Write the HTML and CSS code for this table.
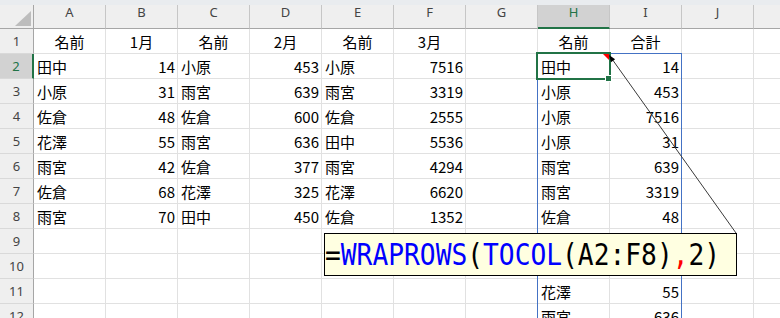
FILE: index.html
```html
<!DOCTYPE html>
<html lang="ja">
<head>
<meta charset="utf-8">
<title>WRAPROWS</title>
<link rel="stylesheet" href="styles.css">
</head>
<body>
<div class="page">
  <div class="topbar"></div>
  <div class="sheet">
    <div class="corner"></div>
    <div class="ch">A</div><div class="ch">B</div><div class="ch">C</div><div class="ch">D</div><div class="ch">E</div><div class="ch">F</div><div class="ch">G</div><div class="ch on">H</div><div class="ch">I</div><div class="ch">J</div><div class="ch"></div>

    <div class="rh">1</div>
    <div class="c m">名前</div><div class="c m">1月</div><div class="c m">名前</div><div class="c m">2月</div><div class="c m">名前</div><div class="c m">3月</div><div class="c"></div><div class="c m">名前</div><div class="c m">合計</div><div class="c"></div><div class="c"></div>

    <div class="rh on">2</div>
    <div class="c">田中</div><div class="c n">14</div><div class="c">小原</div><div class="c n">453</div><div class="c">小原</div><div class="c n">7516</div><div class="c"></div><div class="c">田中</div><div class="c n">14</div><div class="c"></div><div class="c"></div>

    <div class="rh">3</div>
    <div class="c">小原</div><div class="c n">31</div><div class="c">雨宮</div><div class="c n">639</div><div class="c">雨宮</div><div class="c n">3319</div><div class="c"></div><div class="c">小原</div><div class="c n">453</div><div class="c"></div><div class="c"></div>

    <div class="rh">4</div>
    <div class="c">佐倉</div><div class="c n">48</div><div class="c">佐倉</div><div class="c n">600</div><div class="c">佐倉</div><div class="c n">2555</div><div class="c"></div><div class="c">小原</div><div class="c n">7516</div><div class="c"></div><div class="c"></div>

    <div class="rh">5</div>
    <div class="c">花澤</div><div class="c n">55</div><div class="c">雨宮</div><div class="c n">636</div><div class="c">田中</div><div class="c n">5536</div><div class="c"></div><div class="c">小原</div><div class="c n">31</div><div class="c"></div><div class="c"></div>

    <div class="rh">6</div>
    <div class="c">雨宮</div><div class="c n">42</div><div class="c">佐倉</div><div class="c n">377</div><div class="c">雨宮</div><div class="c n">4294</div><div class="c"></div><div class="c">雨宮</div><div class="c n">639</div><div class="c"></div><div class="c"></div>

    <div class="rh">7</div>
    <div class="c">佐倉</div><div class="c n">68</div><div class="c">花澤</div><div class="c n">325</div><div class="c">花澤</div><div class="c n">6620</div><div class="c"></div><div class="c">雨宮</div><div class="c n">3319</div><div class="c"></div><div class="c"></div>

    <div class="rh">8</div>
    <div class="c">雨宮</div><div class="c n">70</div><div class="c">田中</div><div class="c n">450</div><div class="c">佐倉</div><div class="c n">1352</div><div class="c"></div><div class="c">佐倉</div><div class="c n">48</div><div class="c"></div><div class="c"></div>

    <div class="rh">9</div>
    <div class="c"></div><div class="c"></div><div class="c"></div><div class="c"></div><div class="c"></div><div class="c"></div><div class="c"></div><div class="c">佐倉</div><div class="c n">600</div><div class="c"></div><div class="c"></div>

    <div class="rh">10</div>
    <div class="c"></div><div class="c"></div><div class="c"></div><div class="c"></div><div class="c"></div><div class="c"></div><div class="c"></div><div class="c">佐倉</div><div class="c n">2555</div><div class="c"></div><div class="c"></div>

    <div class="rh">11</div>
    <div class="c"></div><div class="c"></div><div class="c"></div><div class="c"></div><div class="c"></div><div class="c"></div><div class="c"></div><div class="c">花澤</div><div class="c n">55</div><div class="c"></div><div class="c"></div>

    <div class="rh">12</div>
    <div class="c"></div><div class="c"></div><div class="c"></div><div class="c"></div><div class="c"></div><div class="c"></div><div class="c"></div><div class="c">雨宮</div><div class="c n">636</div><div class="c"></div><div class="c"></div>
  </div>

  <div class="spill"></div>
  <div class="selection"></div>
  <div class="handle"></div>

  <svg class="leader" width="780" height="318" viewBox="0 0 780 318">
    <polygon points="603,54 609,54 609,60" fill="#ff0000"/>
    <line x1="736" y1="233" x2="612" y2="59" stroke="#3a3a3a" stroke-width="1"/>
    <polygon points="609,55 615.1,59.25 611,62.15" fill="#000"/>
  </svg>

  <div class="callout"><span class="formula">=<span class="fn">WRAPROWS</span>(<span class="fn">TOCOL</span>(A2:F8)<span class="sep">,</span>2)</span></div>
</div>
</body>
</html>
```

FILE: styles.css
```css
html, body {
  margin: 0;
  padding: 0;
  background: #ffffff;
  overflow: hidden;
}

.page {
  position: relative;
  width: 780px;
  height: 318px;
  overflow: hidden;
}

.topbar {
  height: 5px;
  background: #e9ecef;
}

.sheet {
  display: grid;
  grid-template-columns: 34px repeat(10, 72px) 1fr;
  grid-template-rows: 24px;
  grid-auto-rows: 25px;
}

.sheet > div {
  box-sizing: border-box;
  white-space: nowrap;
}

.sheet > div:nth-child(12n) {
  border-right: none;
}

.corner {
  position: relative;
  background: #efefef;
  border-right: 1px solid #a6a6a6;
  border-bottom: 1px solid #a6a6a6;
}

.corner::after {
  content: "";
  position: absolute;
  right: 2px;
  bottom: 2px;
  width: 0;
  height: 0;
  border-left: 16px solid transparent;
  border-bottom: 15px solid #bdbdbd;
}

.ch {
  background: #efefef;
  border-right: 1px solid #c6c6c6;
  border-bottom: 1px solid #a6a6a6;
  font: 13px "Noto Sans", "Open Sans", sans-serif;
  color: #444444;
  text-align: center;
  line-height: 14px;
  overflow: visible;
}

.ch.on {
  background: #d2d2d2;
  color: #217346;
  border-bottom: 2px solid #217346;
}

.rh {
  background: #efefef;
  border-right: 1px solid #a6a6a6;
  border-bottom: 1px solid #d9d9d9;
  display: flex;
  align-items: center;
  justify-content: center;
  font: 13px "Noto Sans", "Open Sans", sans-serif;
  color: #444444;
}

.rh.on {
  background: #d2d2d2;
  color: #217346;
  border-right: 2px solid #217346;
}

.c {
  border-right: 1px solid #e1e1e1;
  border-bottom: 1px solid #e1e1e1;
  display: flex;
  align-items: center;
  padding: 0 3px;
  font: 15px "Noto Sans CJK JP", "Noto Sans", sans-serif;
  color: #000000;
  overflow: hidden;
}

.c.n {
  justify-content: flex-end;
  padding-right: 2px;
}

.c.m {
  justify-content: center;
}

.spill {
  position: absolute;
  left: 537px;
  top: 53px;
  width: 145px;
  height: 290px;
  box-sizing: border-box;
  border: 1px solid #4472c4;
  border-bottom: none;
}

.selection {
  position: absolute;
  left: 536px;
  top: 52px;
  width: 75px;
  height: 28px;
  box-sizing: border-box;
  border: 2px solid #217346;
}

.handle {
  position: absolute;
  left: 605px;
  top: 75px;
  width: 7px;
  height: 7px;
  box-sizing: border-box;
  background: #217346;
  border: 1px solid #ffffff;
}

.leader {
  position: absolute;
  left: 0;
  top: 0;
  pointer-events: none;
}

.callout {
  position: absolute;
  left: 324px;
  top: 233px;
  width: 413px;
  height: 43px;
  box-sizing: border-box;
  border: 1px solid #000000;
  background: #ffffe1;
  overflow: hidden;
  white-space: nowrap;
}

.formula {
  display: inline-block;
  font: 30px/41px "DejaVu Sans Mono", "Liberation Mono", monospace;
  color: #000000;
  transform: scaleX(0.875);
  transform-origin: 0 50%;
}

.formula .fn {
  color: #0000ff;
}

.formula .sep {
  color: #ff0000;
}
```
